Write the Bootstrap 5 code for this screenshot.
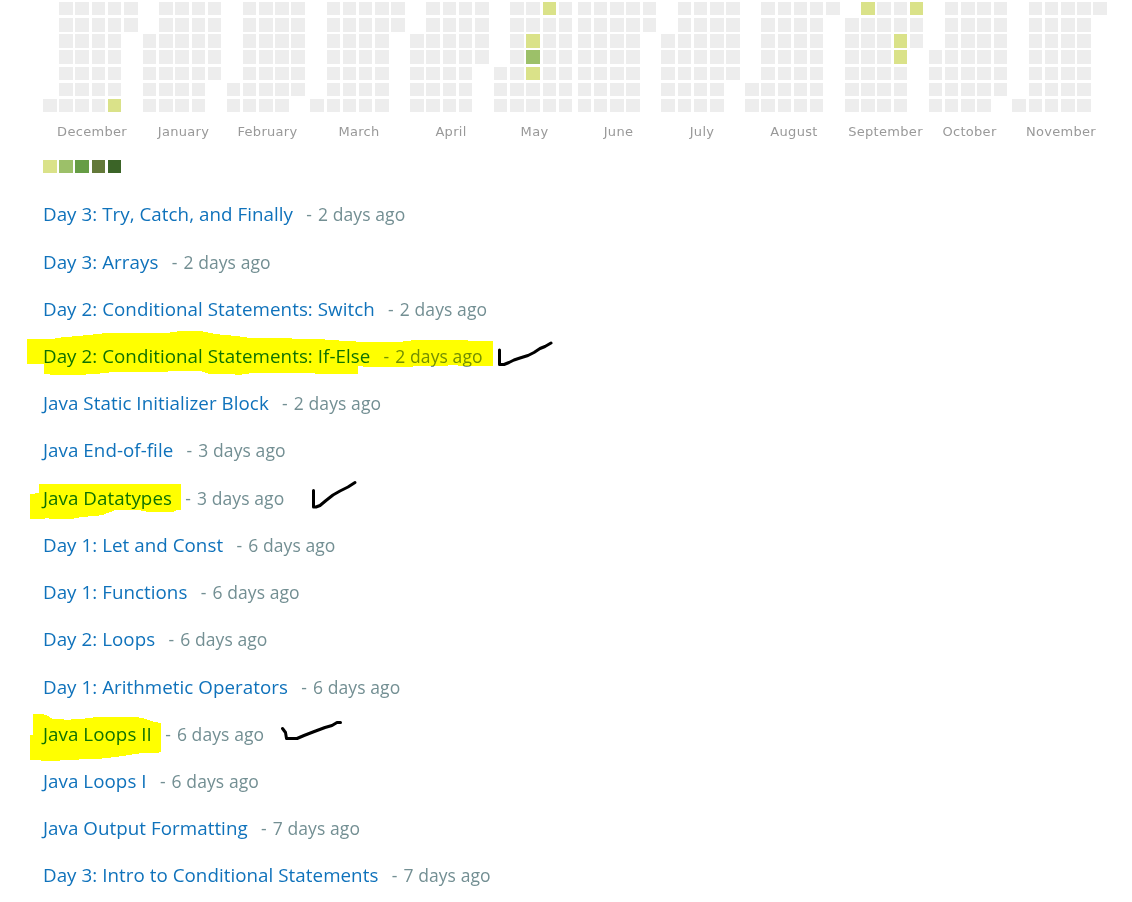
<!DOCTYPE html>
<html lang="en">
<head>
<meta charset="utf-8">
<meta name="viewport" content="width=device-width, initial-scale=1">
<title>Submission history</title>
<link href="https://cdn.jsdelivr.net/npm/bootstrap@5.3.0/dist/css/bootstrap.min.css" rel="stylesheet">
<style>
body{font-family:"Open Sans",sans-serif;height:902px;overflow:hidden}
.page-wrap{height:902px;padding:2px 0 0 43px;overflow:hidden}
.heat-days{height:110px}
.heat-week{display:grid;grid-template-rows:16px 16px 16px 17px 16px 16px 13px;flex:none}
.heat-day{background:#ededed;height:13px}
.heat-day.tall{height:14px}
.heat-day.l1,.legend-box.l1{background:#dae289}
.heat-day.l2,.legend-box.l2{background:#9cc069}
.legend-box.l3{background:#669d45}
.legend-box.l4{background:#637939}
.legend-box.l5{background:#3b6427}
.heat-label{font:13px/16px "DejaVu Sans",sans-serif;letter-spacing:.3px;color:#999;margin:12px -10px 0 -7px}
.legend-row{margin-top:20px;height:13px}
.legend-box{width:14px;margin-right:2px}
.legend-box.l3{margin-right:3px}
.legend-box.l4,.legend-box.l5{width:13px;margin-right:3px}
.history{margin-top:17.35px}
.history li{height:47.22px;line-height:47.22px;white-space:nowrap}
.history a{font-size:18.75px;letter-spacing:.05px;color:#0f72bb}
.history span{font-size:17.5px;letter-spacing:.09px;color:#738f93}
.history .dash{margin:0 6px 0 13.3px}
.ink{pointer-events:none;mix-blend-mode:multiply}
</style>
</head>
<body class="bg-white">
<main class="page-wrap position-relative">
  <div class="d-flex" id="heatmap"></div>
  <div class="d-flex legend-row">
    <div class="legend-box l1"></div><div class="legend-box l2"></div><div class="legend-box l3"></div><div class="legend-box l4"></div><div class="legend-box l5"></div>
  </div>
  <ul class="list-unstyled history mb-0">
    <li><a class="text-decoration-none" href="#">Day 3: Try, Catch, and Finally</a><span class="dash">-</span><span>2 days ago</span></li>
    <li><a class="text-decoration-none" href="#">Day 3: Arrays</a><span class="dash">-</span><span>2 days ago</span></li>
    <li><a class="text-decoration-none" href="#">Day 2: Conditional Statements: Switch</a><span class="dash">-</span><span>2 days ago</span></li>
    <li><a class="text-decoration-none" href="#">Day 2: Conditional Statements: If-Else</a><span class="dash">-</span><span>2 days ago</span></li>
    <li><a class="text-decoration-none" href="#">Java Static Initializer Block</a><span class="dash">-</span><span>2 days ago</span></li>
    <li><a class="text-decoration-none" href="#">Java End-of-file</a><span class="dash">-</span><span>3 days ago</span></li>
    <li><a class="text-decoration-none" href="#">Java Datatypes</a><span class="dash">-</span><span>3 days ago</span></li>
    <li><a class="text-decoration-none" href="#">Day 1: Let and Const</a><span class="dash">-</span><span>6 days ago</span></li>
    <li><a class="text-decoration-none" href="#">Day 1: Functions</a><span class="dash">-</span><span>6 days ago</span></li>
    <li><a class="text-decoration-none" href="#">Day 2: Loops</a><span class="dash">-</span><span>6 days ago</span></li>
    <li><a class="text-decoration-none" href="#">Day 1: Arithmetic Operators</a><span class="dash">-</span><span>6 days ago</span></li>
    <li><a class="text-decoration-none" href="#">Java Loops II</a><span class="dash">-</span><span>6 days ago</span></li>
    <li><a class="text-decoration-none" href="#">Java Loops I</a><span class="dash">-</span><span>6 days ago</span></li>
    <li><a class="text-decoration-none" href="#">Java Output Formatting</a><span class="dash">-</span><span>7 days ago</span></li>
    <li><a class="text-decoration-none" href="#">Day 3: Intro to Conditional Statements</a><span class="dash">-</span><span>7 days ago</span></li>
  </ul>
  <!-- highlighter and pen marks over the list -->
  <svg class="ink position-absolute top-0 start-0" width="1132" height="902" viewBox="0 0 1132 902" aria-hidden="true">
    <g fill="#ff0" shape-rendering="crispEdges">
      <path d="M27 339H55V338L77 336L88 335L106 333H170V332L184 331H201L215 334L236 336L250 338H292V339H325V340H339V341L372 342H403V341L418 340H468V341H493V366H468L448 365V366H413V367H363V366H358V374H315V373H249V374L235 375V374H210L203 372L200 371H181V370H181V371L154 372H109V373L90 374L82 375H50V374H44V364H27Z"/>
      <path d="M39 484H181V510H177L173 512H146V511H141V510H114V511L107 513L103 515L94 516L81 517L72 519H49V518L40 519H30V494L39 493Z"/>
      <path d="M33 714H43L48 716L53 719H64V720L92 718L94 717H136L146 719L154 722L161 723V752L157 753H142L129 755L116 757L97 759L60 760V761H41V760H30V735H33Z"/>
    </g>
    <g fill="none" stroke="#000" stroke-width="3" stroke-linecap="round" stroke-linejoin="round">
      <path d="M499.500 350V364.500H504L509 362.500L514 360L520 358L528 355.500L534 352.500L540 348.500L545 346.500L551 343"/>
      <path d="M313.500 490.500V507H316L320 505.500L326 500.500L333 495L340 491L348 487L355 482.500"/>
      <path d="M282.500 728.500L285.500 732.500L286.500 738.500H297L304 735.500L313 732L325 727.500L332 725.500L337 722.500H340.500"/>
    </g>
  </svg>
</main>
<script src="https://cdn.jsdelivr.net/npm/bootstrap@5.3.0/dist/js/bootstrap.bundle.min.js"></script>
<script>
// Each month: name, week columns [x, width], first weekday row, last weekday row, activity {"week,row": level}
const months = [
  ["December", [[43,14],[59,14],[75,14],[92,13],[108,13],[124,14]], 6, 1, {"4,6":1}],
  ["January", [[143,13],[159,14],[175,14],[192,13],[208,13]], 2, 4, {}],
  ["February", [[227,13],[243,13],[259,14],[275,14],[291,14]], 5, 5, {}],
  ["March", [[310,14],[327,13],[343,13],[359,13],[375,14],[391,14]], 6, 1, {}],
  ["April", [[410,14],[426,14],[443,13],[459,13],[475,14]], 2, 3, {}],
  ["May", [[494,13],[510,14],[526,14],[543,13],[559,13]], 4, 6, {"2,2":1,"2,3":2,"2,4":1,"3,0":1}],
  ["June", [[578,13],[594,13],[610,14],[626,14],[643,13]], 0, 1, {}],
  ["July", [[661,14],[678,13],[694,13],[710,14],[726,14]], 2, 4, {}],
  ["August", [[745,14],[761,14],[778,13],[794,13],[810,13],[826,14]], 5, 0, {}],
  ["September", [[845,14],[861,14],[877,14],[894,13],[910,13]], 1, 2, {"1,0":1,"4,0":1,"3,2":1,"3,3":1}],
  ["October", [[929,13],[945,13],[961,14],[977,14],[994,13]], 3, 5, {}],
  ["November", [[1012,14],[1029,13],[1045,13],[1061,14],[1077,14],[1093,14]], 6, 0, {}]
];
let edge = 43, html = "";
for (const [name, weeks, first, last, marks] of months) {
  html += `<section class="flex-shrink-0" style="margin-left:${weeks[0][0] - edge}px"><div class="heat-days d-flex">`;
  edge = weeks[0][0];
  weeks.forEach(([x, w], i) => {
    html += `<div class="heat-week" style="width:${w}px;margin-left:${x - edge}px">`;
    edge = x + w;
    for (let r = 0; r < 7; r++) {
      const on = !(i === 0 && r < first) && !(i === weeks.length - 1 && r > last);
      const level = marks[i + "," + r];
      html += on ? `<div class="heat-day${r > 0 && r < 4 ? " tall" : ""}${level ? " l" + level : ""}"></div>` : "<div></div>";
    }
    html += "</div>";
  });
  html += `</div><div class="heat-label text-center text-nowrap">${name}</div></section>`;
}
document.getElementById("heatmap").innerHTML = html;
</script>
</body>
</html>
